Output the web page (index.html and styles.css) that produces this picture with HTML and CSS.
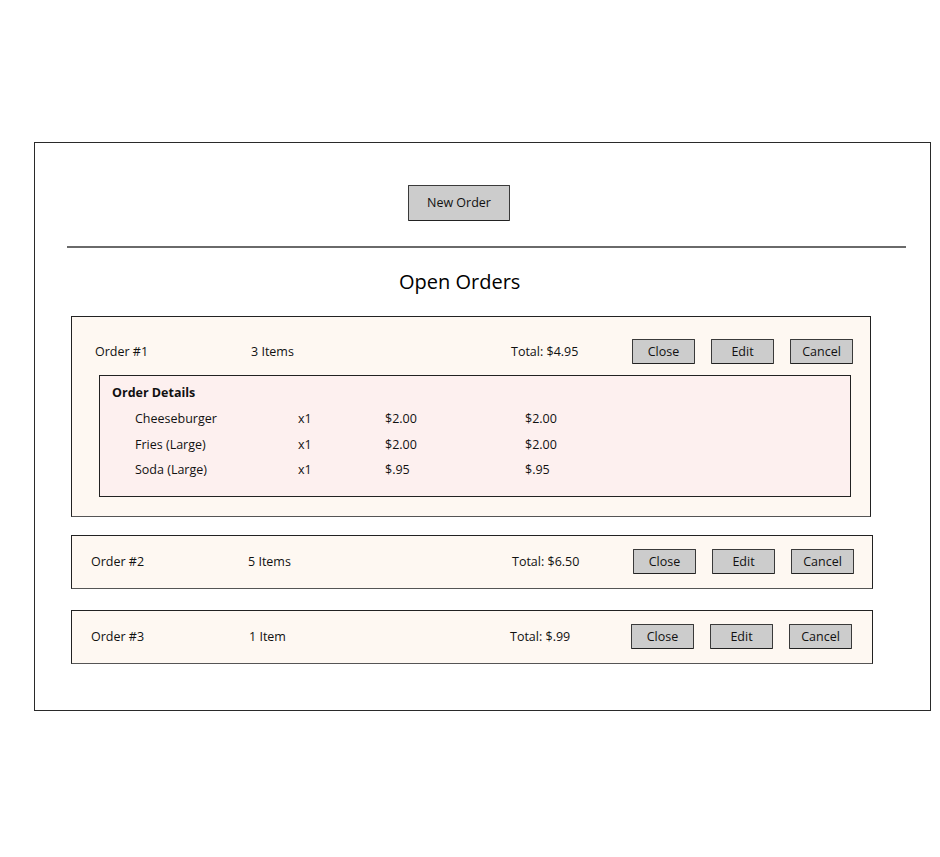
FILE: index.html
```html
<!DOCTYPE html>
<html>
<head>
<meta charset="utf-8">
<link rel="stylesheet" href="styles.css">
</head>
<body>
<div class="frame">
  <div class="header">
    <button class="btn btn-new">New Order</button>
  </div>
  <div class="divider"></div>
  <h1 class="title">Open Orders</h1>
  <div class="orders">
    <div class="card card-open">
      <div class="row">
        <span>Order #1</span>
        <span>3 Items</span>
        <span>Total: $4.95</span>
        <div class="actions">
          <button class="btn">Close</button>
          <button class="btn">Edit</button>
          <button class="btn">Cancel</button>
        </div>
      </div>
      <div class="details">
        <div class="details-title">Order Details</div>
        <div class="items">
          <span>Cheeseburger</span><span>x1</span><span>$2.00</span><span>$2.00</span>
          <span>Fries (Large)</span><span>x1</span><span>$2.00</span><span>$2.00</span>
          <span>Soda (Large)</span><span>x1</span><span>$.95</span><span>$.95</span>
        </div>
      </div>
    </div>
    <div class="card card-compact">
      <div class="row row-alt">
        <span>Order #2</span>
        <span>5 Items</span>
        <span>Total: $6.50</span>
        <div class="actions">
          <button class="btn">Close</button>
          <button class="btn">Edit</button>
          <button class="btn">Cancel</button>
        </div>
      </div>
    </div>
    <div class="card card-compact card-last">
      <div class="row row-alt row-last">
        <span>Order #3</span>
        <span>1 Item</span>
        <span>Total: $.99</span>
        <div class="actions">
          <button class="btn">Close</button>
          <button class="btn">Edit</button>
          <button class="btn">Cancel</button>
        </div>
      </div>
    </div>
  </div>
</div>
</body>
</html>
```

FILE: styles.css
```css
html, body {
  margin: 0;
  padding: 0;
  background: #ffffff;
}
body {
  font-family: "Open Sans", "Liberation Sans", sans-serif;
  font-size: 12.5px;
  color: #111;
}
.frame {
  box-sizing: border-box;
  margin: 142px 0 0 34px;
  width: 897px;
  height: 569px;
  border: 1px solid #2a2a2a;
}
.header {
  padding-top: 42px;
  padding-left: 373px;
  height: 35px;
}
.btn {
  box-sizing: border-box;
  margin: 0;
  padding: 0;
  font-family: inherit;
  font-size: 12.5px;
  color: #111;
  background: #cccccc;
  border: 1px solid #3a3a3a;
  border-bottom-color: #222;
  border-radius: 1px;
  width: 63px;
  height: 25px;
  line-height: 23px;
  text-align: center;
}
.btn-new {
  width: 102px;
  height: 36px;
  line-height: 34px;
}
.divider {
  margin: 26px 24px 0 32px;
  height: 2px;
  background: #6a6a6a;
}
.title {
  margin: 21px 0 0 0;
  padding-left: 364px;
  font-size: 20px;
  font-weight: 400;
  line-height: 26px;
  color: #000;
}
.orders {
  margin: 21px 0 0 36px;
  width: 801px;
}
.card {
  box-sizing: border-box;
  background: #fef8f2;
  border: 1px solid #222;
  border-bottom-color: #555;
}
.card-open {
  width: 800px;
  padding: 22px 0 19px 0;
}
.card-compact {
  width: 802px;
  margin-top: 18px;
  padding: 13px 0 14px 0;
}
.card-last {
  margin-top: 21px;
}
.row {
  display: grid;
  grid-template-columns: 156px 260px 121px auto;
  align-items: center;
  height: 25px;
  padding-left: 23px;
}
.row-alt {
  padding-left: 19px;
  grid-template-columns: 157px 264px 121px auto;
}
.row-last {
  grid-template-columns: 158px 261px 121px auto;
}
.actions {
  display: flex;
  gap: 16px;
}
.details {
  box-sizing: border-box;
  margin: 11px 19px 0 27px;
  height: 122px;
  background: #fdf0ef;
  border: 1px solid #222;
  padding: 7px 0 0 12px;
}
.details-title {
  font-weight: 700;
  line-height: 20px;
}
.items {
  margin-top: 3px;
  padding-left: 23px;
  display: grid;
  grid-template-columns: 163px 87px 140px auto;
  grid-auto-rows: 25.5px;
  align-items: center;
}
```
